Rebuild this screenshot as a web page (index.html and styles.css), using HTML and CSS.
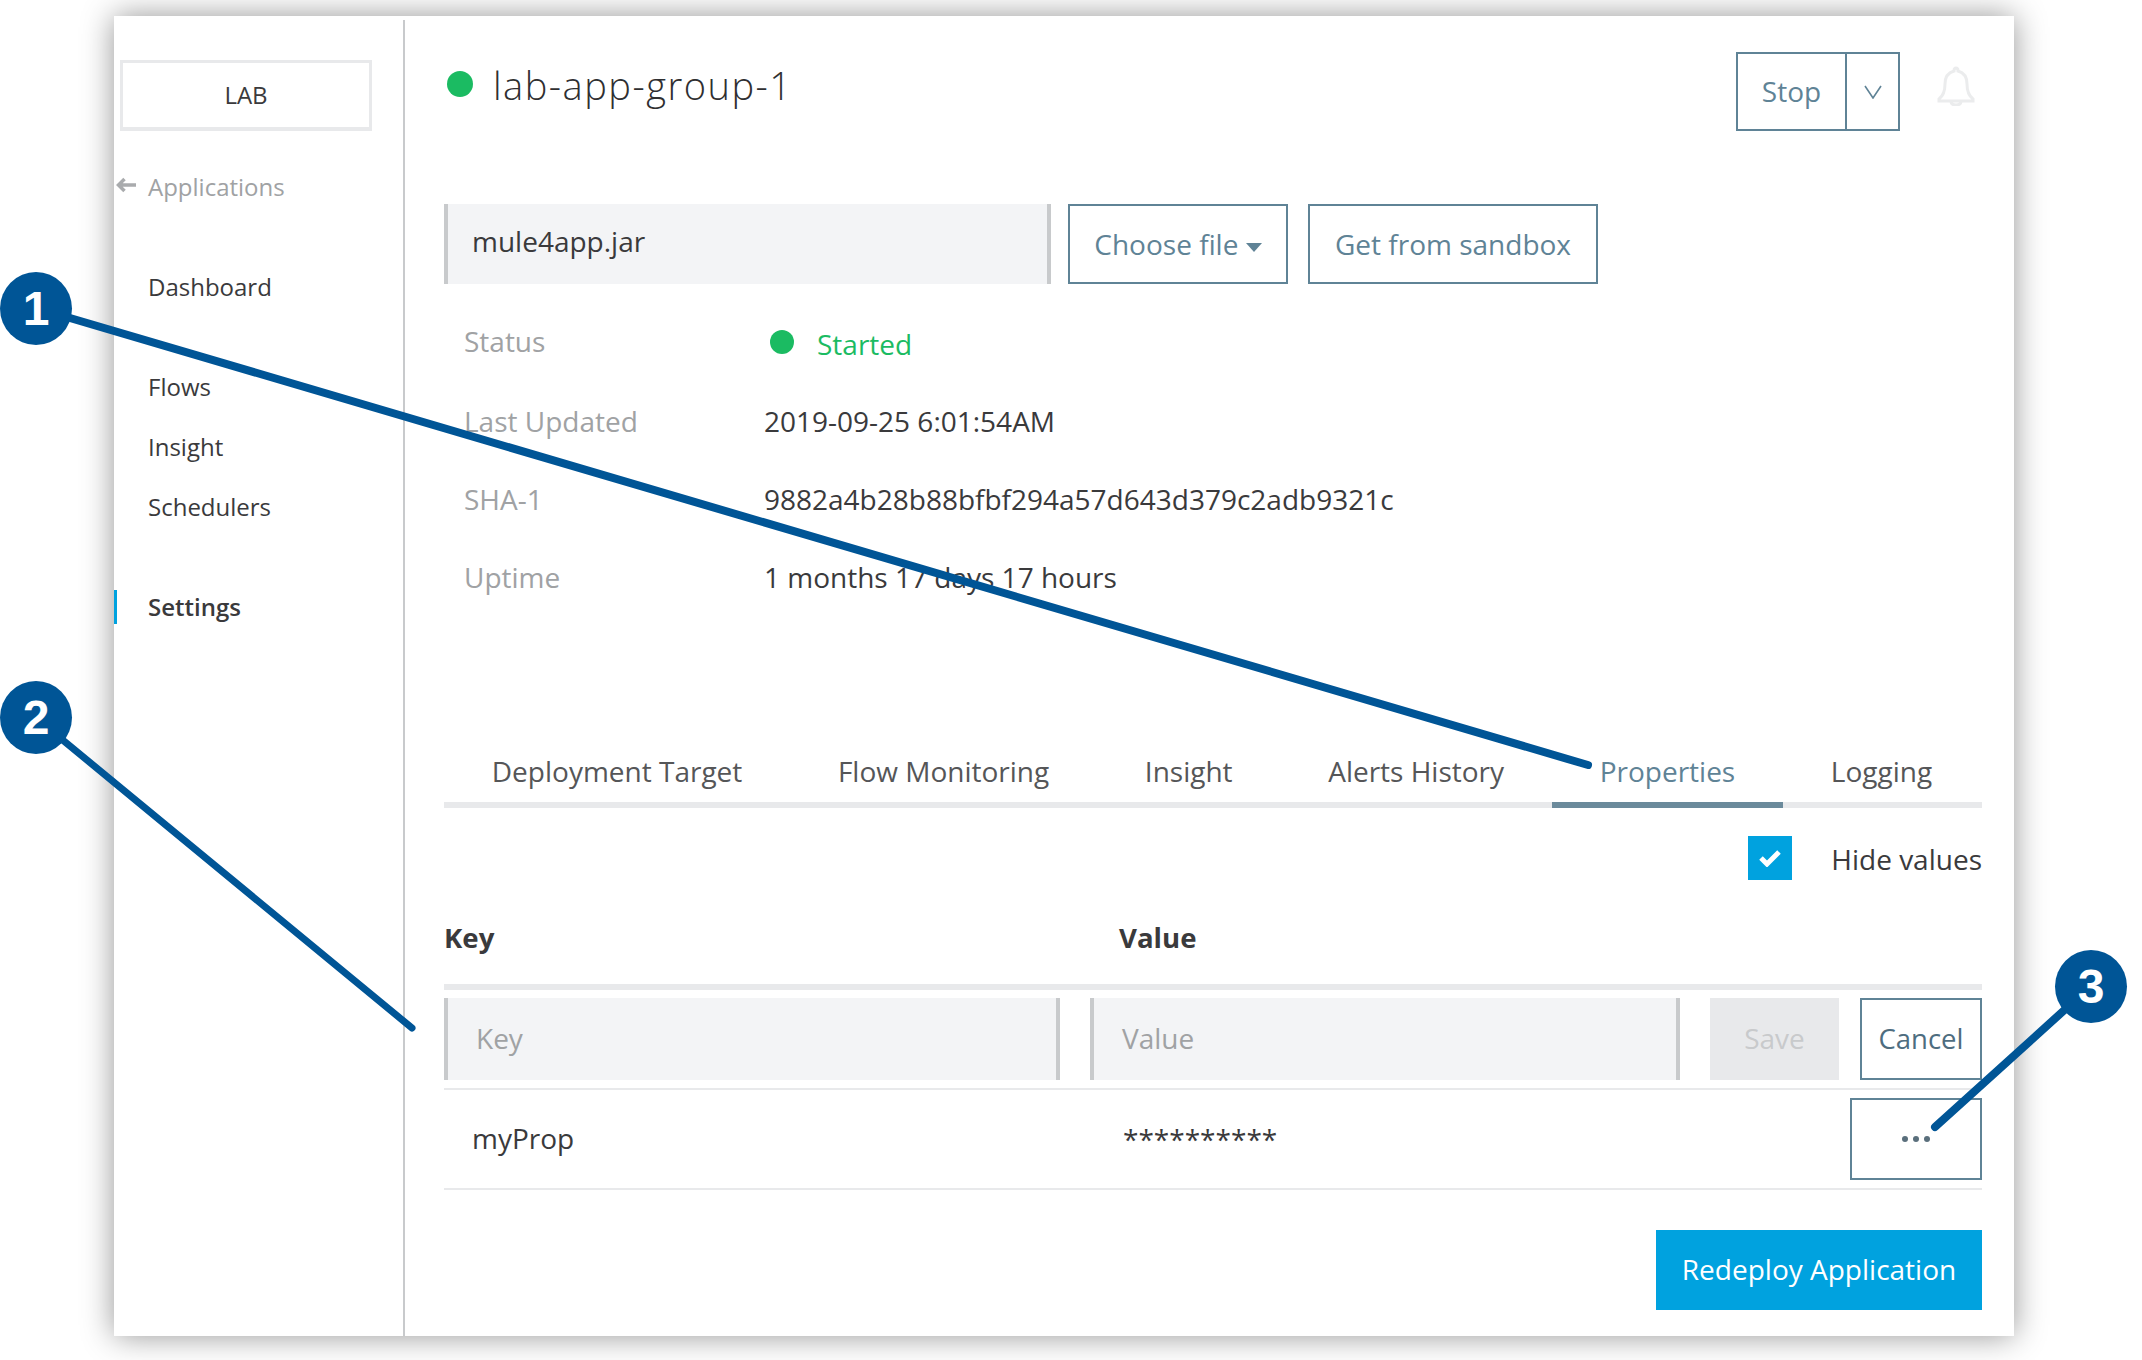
FILE: index.html
```html
<!DOCTYPE html>
<html lang="en">
	<head>
		<meta charset="utf-8">
		<title>lab-app-group-1</title>
		<link rel="stylesheet" href="styles.css">
	</head>
	<body>
		<div class="panel">
			<div class="sidebar">
				<div class="env">LAB</div>
				<div class="back">
					<svg class="back-arrow" width="20" height="16" viewBox="0 0 20 16"><path d="M20 8H2.500M8.500 2L2.500 8l6 6" fill="none" stroke="#a9abad" stroke-width="3.500"/></svg>
					<span>Applications</span>
				</div>
				<div class="nav nav-dashboard">Dashboard</div>
				<div class="nav nav-flows">Flows</div>
				<div class="nav">Insight</div>
				<div class="nav">Schedulers</div>
				<div class="nav nav-active">Settings</div>
			</div>
			<div class="main">
				<div class="head">
					<div class="dot dot-big"></div>
					<h1>lab-app-group-1</h1>
					<div class="stop">
						<div class="stop-label">Stop</div>
						<div class="stop-more">
							<svg width="18" height="14" viewBox="0 0 18 14"><path d="M1 1l8 12 8-12" fill="none" stroke="#5f8396" stroke-width="1.600"/></svg>
						</div>
					</div>
					<svg class="bell" width="38" height="40" viewBox="0 0 38 40"><path d="M19 2c-1.500 0-2 1-2 3C10 7 8 12 8 18c0 8-2 12-6 15v2h34v-2c-4-3-6-7-6-15 0-6-2-11-9-13 0-2-.5-3-2-3zM14 35c0 3 2 4 5 4s5-1 5-4" fill="none" stroke="#ebeced" stroke-width="3"/></svg>
				</div>
				<div class="file-row">
					<div class="file-name">mule4app.jar</div>
					<div class="btn btn-choose">Choose file <span class="caret"></span></div>
					<div class="btn btn-sandbox">Get from sandbox</div>
				</div>
				<div class="info">
					<div class="info-row info-first">
						<div class="info-label">Status</div>
						<div class="info-value started"><span class="dot dot-small"></span>Started</div>
					</div>
					<div class="info-row">
						<div class="info-label">Last Updated</div>
						<div class="info-value">2019-09-25 6:01:54AM</div>
					</div>
					<div class="info-row">
						<div class="info-label">SHA-1</div>
						<div class="info-value">9882a4b28b88bfbf294a57d643d379c2adb9321c</div>
					</div>
					<div class="info-row">
						<div class="info-label">Uptime</div>
						<div class="info-value">1 months 17 days 17 hours</div>
					</div>
				</div>
				<div class="tabs">
					<div class="tab">Deployment Target</div>
					<div class="tab">Flow Monitoring</div>
					<div class="tab">Insight</div>
					<div class="tab">Alerts History</div>
					<div class="tab tab-active">Properties</div>
					<div class="tab">Logging</div>
				</div>
				<div class="hide-row">
					<div class="checkbox">
						<svg width="22" height="18" viewBox="0 0 22 18"><path d="M2 9l6 6L20 3" fill="none" stroke="#fff" stroke-width="5"/></svg>
					</div>
					<div class="hide-label">Hide values</div>
				</div>
				<div class="table-head">
					<div class="col-key">Key</div>
					<div>Value</div>
				</div>
				<div class="edit-row">
					<div class="input input-key">Key</div>
					<div class="input input-value">Value</div>
					<div class="btn-save">Save</div>
					<div class="btn btn-cancel">Cancel</div>
				</div>
				<div class="prop-row">
					<div class="prop-key">myProp</div>
					<div class="prop-value">**********</div>
					<div class="btn btn-more">
						<span></span><span></span><span></span>
					</div>
				</div>
				<div class="foot">
					<div class="btn-redeploy">Redeploy Application</div>
				</div>
			</div>
		</div>

		<!-- callouts sit over the screenshot -->
		<svg class="callout-lines" width="2142" height="1360" viewBox="0 0 2142 1360">
			<g fill="none" stroke="#005596" stroke-linecap="round">
				<path d="M36 308L1588 765" stroke-width="8"/>
				<path d="M36 718L412 1028" stroke-width="7"/>
				<path d="M2091 986L1935 1127" stroke-width="8"/>
			</g>
		</svg>
		<div class="badge badge-1">1</div>
		<div class="badge badge-2">2</div>
		<div class="badge badge-3">3</div>
	</body>
</html>
```

FILE: styles.css
```css
* {
	margin: 0;
	padding: 0;
	box-sizing: border-box;
}

body {
	width: 2142px;
	height: 1360px;
	overflow: hidden;
	position: relative;
	background: #fff;
	color: #3a3a3c;
	font-family: "Open Sans", sans-serif;
	font-size: 28px;
}

.panel {
	display: flex;
	width: 1900px;
	height: 1320px;
	margin: 16px 0 0 114px;
	background: #fff;
	box-shadow: 0 0 30px rgba(0, 0, 0, 0.42);
}

/* sidebar */
.sidebar {
	width: 291px;
	flex-shrink: 0;
	margin-top: 4px;
	padding-top: 40px;
	border-right: 2px solid #c8cacc;
	font-size: 24px;
}

.env {
	width: 252px;
	height: 71px;
	margin-left: 6px;
	border: 3px solid #e8e9eb;
	border-bottom-width: 4px;
	text-align: center;
	line-height: 64px;
}

.back {
	display: flex;
	align-items: center;
	height: 34px;
	margin-top: 38px;
	color: #a0a2a4;
}

.back-arrow {
	margin: -2px 12px 0 2px;
}

.nav {
	height: 34px;
	line-height: 34px;
	margin-top: 26px;
	padding-left: 34px;
}

.nav-dashboard {
	margin-top: 67px;
}

.nav-flows {
	margin-top: 66px;
}

.nav-active {
	margin-top: 66px;
	border-left: 3px solid #00a2df;
	padding-left: 31px;
	font-weight: 600;
}

/* main */
.main {
	flex: 1;
	padding: 36px 32px 0 39px;
}

.head {
	display: flex;
	align-items: flex-start;
	height: 79px;
}

.dot {
	background: #1bbb62;
	border-radius: 50%;
}

.dot-big {
	width: 26px;
	height: 26px;
	margin-top: 19px;
	margin-left: 3px;
}

h1 {
	flex: 1;
	margin-left: 20px;
	margin-top: 17px;
	color: #2f2f31;
	font-size: 38px;
	font-weight: 300;
	letter-spacing: 1.5px;
	line-height: 32px;
}

.stop {
	display: flex;
	width: 164px;
	height: 79px;
	border: 2px solid #5f8396;
	color: #5f8396;
}

.stop-label {
	width: 109px;
	border-right: 2px solid #5f8396;
	text-align: center;
	line-height: 75px;
}

.stop-more {
	flex: 1;
	display: flex;
	align-items: center;
	justify-content: center;
}

.bell {
	margin: 14px 7px 0 37px;
}

.file-row {
	display: flex;
	margin-top: 73px;
}

.file-name {
	width: 607px;
	height: 80px;
	padding-left: 24px;
	background: #f3f4f6;
	border-left: 4px solid #c8cacc;
	border-right: 4px solid #c8cacc;
	line-height: 74px;
}

.btn {
	border: 2px solid #5f8396;
	color: #5f8396;
	text-align: center;
}

.btn-choose {
	width: 220px;
	height: 80px;
	margin-left: 17px;
	line-height: 76px;
}

.caret {
	display: inline-block;
	vertical-align: middle;
	border-left: 8px solid transparent;
	border-right: 8px solid transparent;
	border-top: 9px solid #5f8396;
}

.btn-sandbox {
	width: 290px;
	height: 80px;
	margin-left: 20px;
	line-height: 76px;
}

.info {
	margin-top: 19px;
}

.info-row {
	display: flex;
	height: 78px;
	align-items: center;
}

.info-first {
	height: 79px;
}

.info-first .info-label {
	margin-top: -3px;
}

.info-label {
	width: 320px;
	padding-left: 20px;
	color: #a0a2a4;
}

.started {
	display: flex;
	align-items: center;
	margin-top: 2px;
	color: #1bbb62;
}

.dot-small {
	width: 24px;
	height: 24px;
	margin: -4px 23px 0 6px;
}

.tabs {
	display: flex;
	margin-top: 129px;
	border-bottom: 6px solid #e8e9eb;
	height: 63px;
}

.tab {
	flex-shrink: 0;
	height: 63px;
	padding: 0 47.8px;
	color: #555658;
	line-height: 53px;
	white-space: nowrap;
}

.tab-active {
	color: #5f8396;
	border-bottom: 6px solid #6b8a9b;
}

.hide-row {
	display: flex;
	justify-content: flex-end;
	align-items: center;
	margin-top: 28px;
	height: 44px;
}

.checkbox {
	display: flex;
	align-items: center;
	justify-content: center;
	width: 44px;
	height: 44px;
	margin-right: 39px;
	background: #00a2df;
}

.hide-label {
	margin-top: 1px;
}

.table-head {
	display: flex;
	height: 110px;
	padding-top: 35px;
	border-bottom: 6px solid #e8e9eb;
	font-weight: 700;
	line-height: 44px;
	font-size: 27.6px;
}

.col-key {
	width: 675px;
}

.edit-row {
	display: flex;
	margin-top: 8px;
	height: 82px;
}

.input {
	padding-left: 28px;
	background: #f3f4f6;
	border-left: 4px solid #c8cacc;
	border-right: 4px solid #c8cacc;
	color: #a0a2a4;
	line-height: 80px;
}

.input-key {
	width: 616px;
}

.input-value {
	width: 590px;
	margin-left: 30px;
}

.btn-save {
	width: 129px;
	margin-left: 30px;
	background: #e8e9eb;
	color: #c8cacc;
	text-align: center;
	line-height: 80px;
}

.btn-cancel {
	width: 122px;
	margin-left: 21px;
	line-height: 78px;
	color: #4e6d7f;
	font-size: 27.5px;
}

.prop-row {
	display: flex;
	align-items: center;
	margin-top: 8px;
	height: 102px;
	border-top: 2px solid #e8e9eb;
	border-bottom: 2px solid #e8e9eb;
}

.prop-key {
	width: 679px;
	padding-left: 28px;
	margin-top: -2px;
}

.prop-value {
	flex: 1;
}

.btn-more {
	display: flex;
	align-items: center;
	justify-content: center;
	gap: 5px;
	width: 132px;
	height: 82px;
}

.btn-more span {
	width: 6px;
	height: 6px;
	border-radius: 50%;
	background: #5a6f7c;
}

.foot {
	display: flex;
	justify-content: flex-end;
	margin-top: 40px;
}

.btn-redeploy {
	width: 326px;
	height: 80px;
	background: #00a2df;
	color: #fff;
	text-align: center;
	line-height: 78px;
}

/* callouts */
.callout-lines {
	position: absolute;
	left: 0;
	top: 0;
}

.badge {
	position: absolute;
	width: 72px;
	height: 73px;
	border-radius: 50%;
	background: #005596;
	color: #fff;
	font-family: "Liberation Sans", sans-serif;
	font-size: 48px;
	font-weight: 700;
	text-align: center;
	line-height: 73px;
}

.badge-1 {
	left: 0;
	top: 272px;
}

.badge-2 {
	left: 0;
	top: 681px;
}

.badge-3 {
	left: 2055px;
	top: 950px;
}
```
